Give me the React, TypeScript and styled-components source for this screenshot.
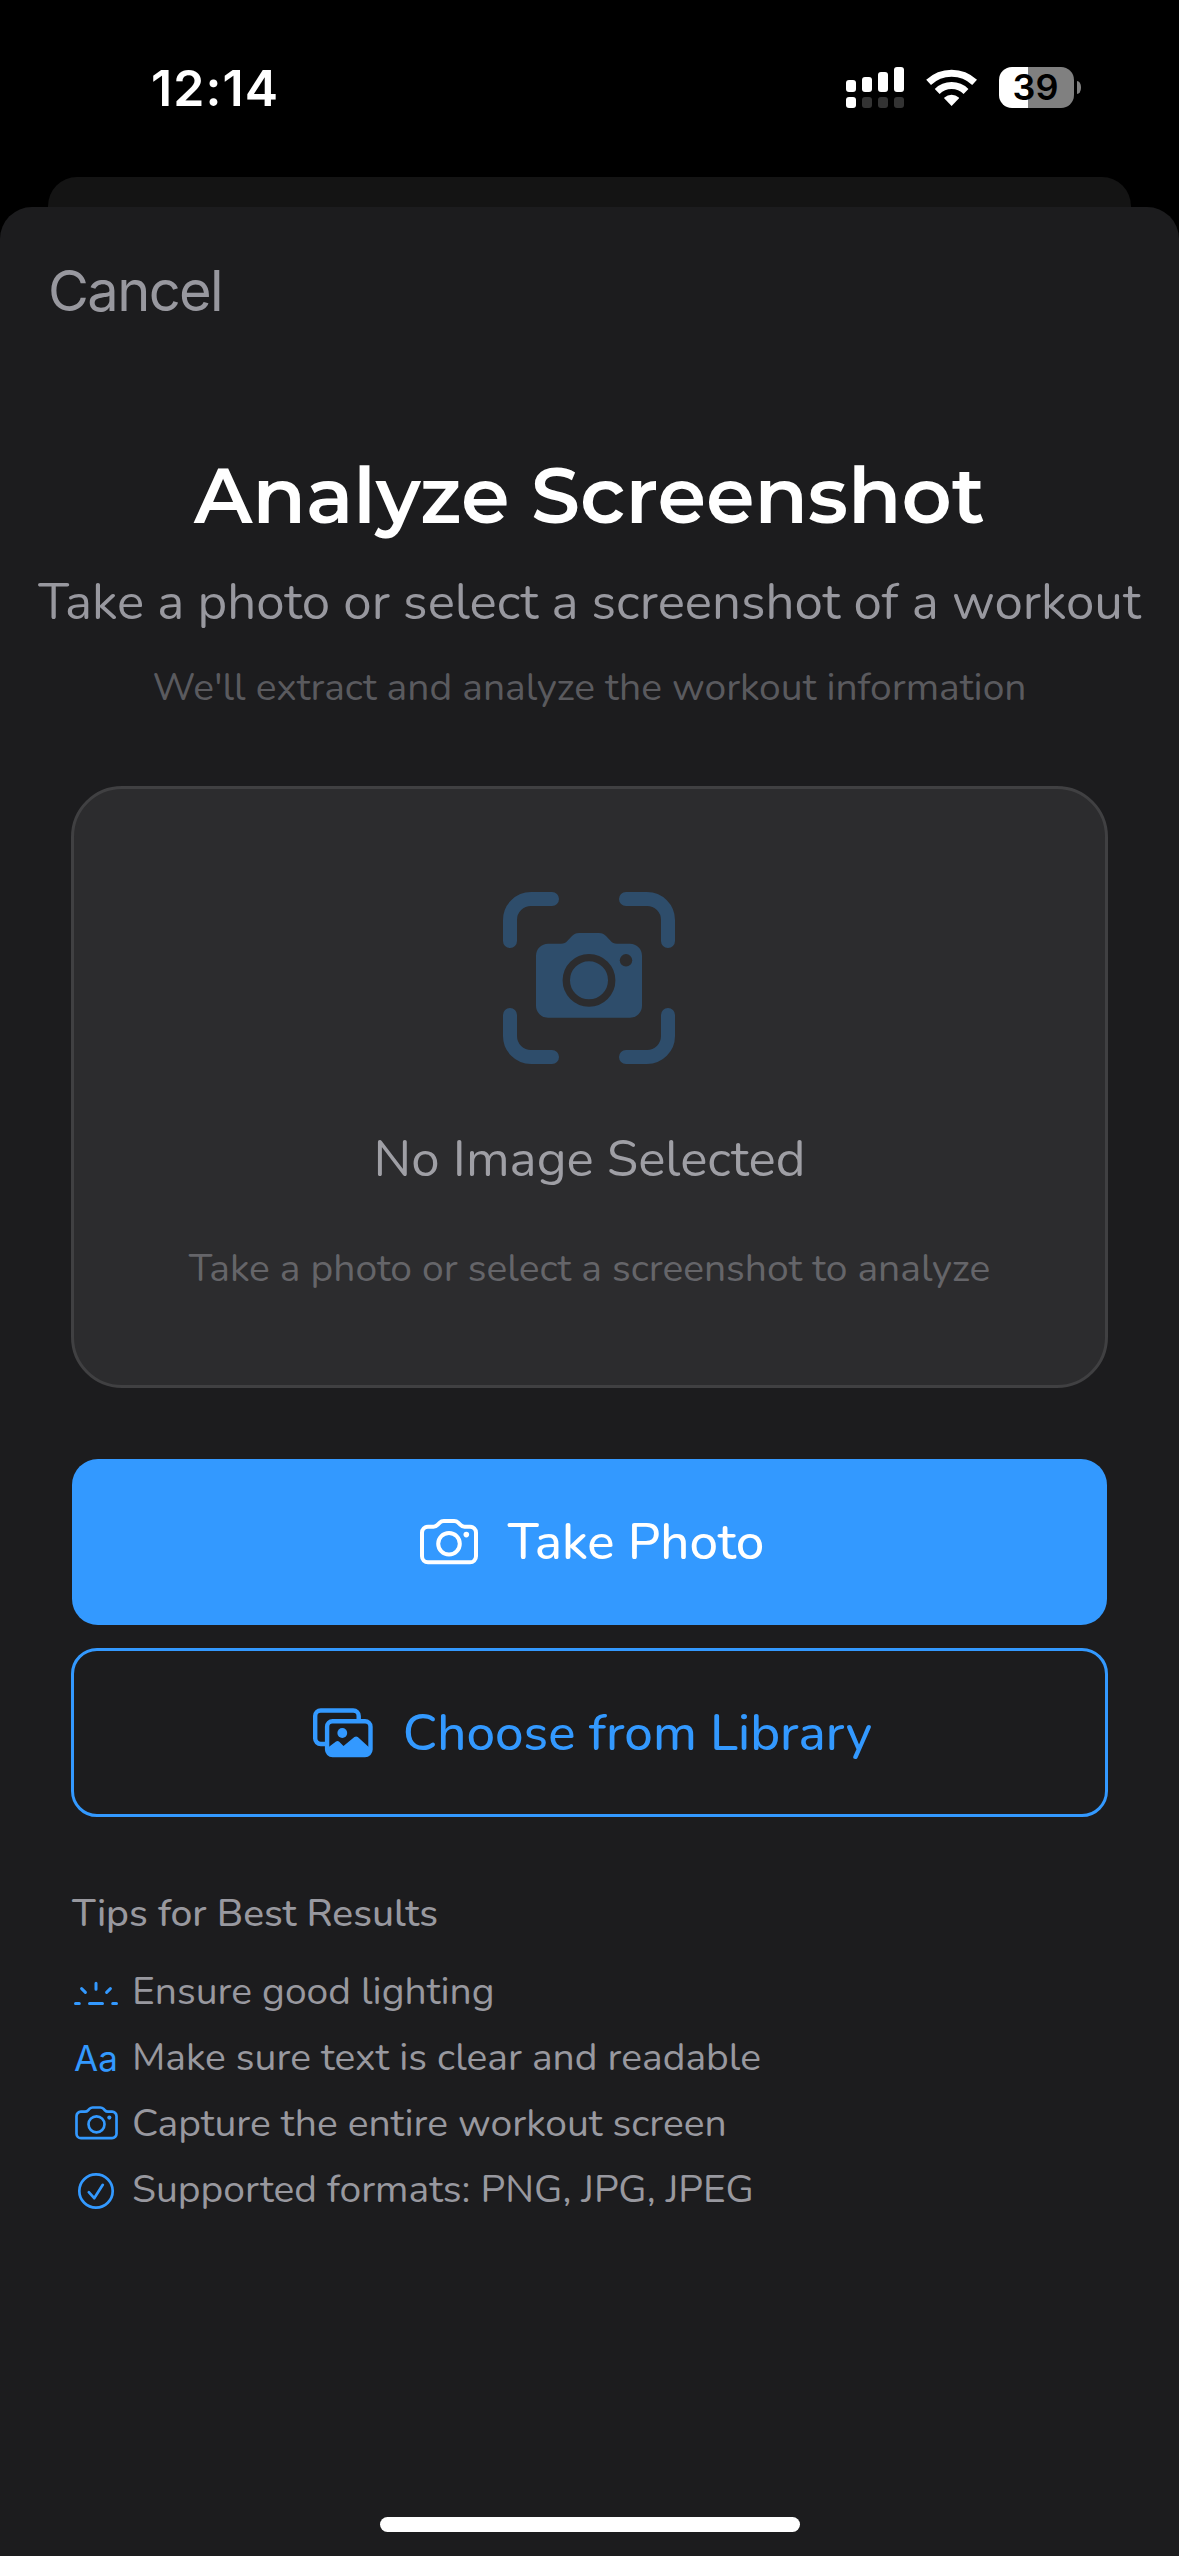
import React from "react";
import styled, { createGlobalStyle } from "styled-components";

const BLUE = "#3399ff";
const SECONDARY = "#98989f";

const GlobalStyle = createGlobalStyle`
  * { box-sizing: border-box; }
  html, body { margin: 0; padding: 0; background: #000; }
`;

const Screen = styled.div`
  width: 1179px;
  height: 2556px;
  display: flex;
  flex-direction: column;
  overflow: hidden;
  background: #000;
  font-family: Nunito, Lato, "Noto Sans", sans-serif;
`;

const StatusBar = styled.header`
  flex: none;
  height: 177px;
  padding: 52px 98px 0 151px;
  display: flex;
  justify-content: space-between;
  align-items: flex-start;
  color: #fff;
`;

const Clock = styled.time`
  font: 600 50px/72px Inter, sans-serif;
  letter-spacing: 1.1px;
`;

const StatusIcons = styled.div`
  display: flex;
  align-items: center;
  padding-top: 15px;
`;

const SignalIcon = styled.svg`
  width: 58px;
  height: 41px;
  margin-right: 22px;
`;

const WifiIcon = styled.svg`
  width: 52px;
  height: 41px;
  margin-right: 21px;
`;

const Battery = styled.div`
  width: 75px;
  height: 41px;
  border-radius: 13px;
  background: linear-gradient(to right, #fff 29px, #808080 29px);
  color: #000;
  display: flex;
  align-items: center;
  justify-content: center;
  padding-right: 2px;
  font: 600 36px/41px Inter, sans-serif;
`;

const BatteryTip = styled.div`
  width: 4px;
  height: 13px;
  margin-left: 3px;
  border-radius: 0 4px 4px 0 / 0 6px 6px 0;
  background: #808080;
`;

const SheetBehind = styled.div`
  flex: none;
  height: 30px;
  margin: 0 48px;
  border-radius: 29px 29px 0 0;
  background: #141414;
`;

const Sheet = styled.main`
  flex: 1;
  display: flex;
  flex-direction: column;
  border-radius: 32px 32px 0 0;
  background: #1c1c1e;
`;

const NavBar = styled.nav`
  padding: 49px 48px 0;
  height: 241px;
`;

const CancelButton = styled.button`
  border: 0;
  padding: 0;
  background: none;
  color: ${SECONDARY};
  font: 400 56px/70px Inter, sans-serif;
  letter-spacing: -1.6px;
`;

const Intro = styled.section`
  display: flex;
  flex-direction: column;
  align-items: center;
  white-space: nowrap;
`;

const Title = styled.h1`
  margin: 0 0 24px;
  font: 600 78px/95px Montserrat, Inter, sans-serif;
  color: #fff;
`;

const Body = styled.p<{ $tone?: string }>`
  margin: 0;
  font-size: 51px;
  line-height: 70px;
  color: ${(p) => p.$tone ?? SECONDARY};
`;

const Caption = styled.p<{ $tone?: string; $gap?: number }>`
  margin: ${(p) => p.$gap ?? 0}px 0 0;
  font-size: 39px;
  line-height: 53px;
  color: ${(p) => p.$tone ?? SECONDARY};
`;

const Content = styled.section`
  display: flex;
  flex-direction: column;
  padding: 72px 71px 0;
`;

const EmptyCard = styled.div`
  height: 602px;
  padding-top: 103px;
  border: 3px solid #404042;
  border-radius: 51px;
  background: #2c2c2e;
  display: flex;
  flex-direction: column;
  align-items: center;
`;

const Viewfinder = styled.svg`
  width: 172px;
  height: 172px;
  margin: 0 1px 60px 0;
`;

const Actions = styled.div`
  display: flex;
  flex-direction: column;
  gap: 23px;
  padding-top: 71px;
`;

const ActionButton = styled.button<{ $outlined?: boolean }>`
  display: flex;
  align-items: center;
  justify-content: center;
  gap: ${(p) => (p.$outlined ? 29 : 30)}px;
  height: ${(p) => (p.$outlined ? 169 : 166)}px;
  margin: ${(p) => (p.$outlined ? "0" : "0 1px")};
  padding: 0 0 0 ${(p) => (p.$outlined ? 2 : 0)}px;
  border: ${(p) => (p.$outlined ? `3px solid ${BLUE}` : "0")};
  border-radius: 26px;
  background: ${(p) => (p.$outlined ? "transparent" : BLUE)};
  color: ${(p) => (p.$outlined ? BLUE : "#fff")};
  font: 500 51px/70px Nunito, Lato, sans-serif;
`;

const Tips = styled.div`
  padding: 70px 1px 0;
`;

const TipsTitle = styled.h2`
  margin: 0 0 25px;
  font-size: 39px;
  line-height: 53px;
  font-weight: 500;
  letter-spacing: -0.04px;
  color: ${SECONDARY};
`;

const TipList = styled.ul`
  list-style: none;
  margin: 0;
  padding: 0;
  display: flex;
  flex-direction: column;
  gap: 13px;
`;

const Tip = styled.li`
  display: flex;
  align-items: center;
  gap: 12px;
  height: 53px;
`;

const TipIcon = styled.span`
  width: 48px;
  height: 48px;
  display: flex;
  align-items: center;
  justify-content: center;
  color: ${BLUE};
`;

const LetterIcon = styled.span`
  font: 400 35px/48px Inter, sans-serif;
`;

const HomeIndicator = styled.div`
  width: 420px;
  height: 15px;
  margin: auto auto 24px;
  border-radius: 8px;
  background: #fff;
`;

function CameraOutline({ width, stroke, inset = 0 }: { width: number; stroke: number; inset?: number }) {
  const units = 58 + inset;
  return (
    <svg width={width} height={(width / units) * 46} viewBox={`${-inset} 0 ${units} 46`} fill="none" stroke="currentColor" strokeWidth={stroke}>
      <path d="M8 7.7H13.5c2 0 3-.6 4.3-2l2-2.1c1-1 2-1.6 4-1.6H34.2c2 0 3 .6 4 1.6l2 2.1c1.3 1.4 2.3 2 4.3 2H50a6 6 0 0 1 6 6V37.3a6 6 0 0 1-6 6H8a6 6 0 0 1-6-6V13.7a6 6 0 0 1 6-6z" />
      <circle cx="29" cy="24.7" r="10.8" />
      <circle cx="46.3" cy="15.6" r="2.8" fill="currentColor" stroke="none" />
    </svg>
  );
}

function PhotoStack() {
  return (
    <svg width="65" height="50" viewBox="0 0 65 50" fill="none" stroke="currentColor" strokeWidth="4.4">
      <path d="M49.7 13V8a5.5 5.5 0 0 0-5.5-5.5H11.7A5.5 5.5 0 0 0 6.2 8v22.5a5.5 5.5 0 0 0 5.5 5.5H18" />
      <rect x="18.1" y="13.2" width="43.4" height="33.8" rx="5.5" />
      <path d="M18.5 40l2.5-2 6-4.4q1.5-1 3 0l4.5 4.4 10.9-8.9q1.7-1.3 3.4 0L58.6 38l2.4 2v4q0 3-4 3H22.5q-4 0-4-3z" fill="currentColor" stroke="none" />
      <circle cx="33.3" cy="25" r="4.9" fill="currentColor" stroke="none" />
    </svg>
  );
}

function SunHorizon() {
  return (
    <svg width="48" height="48" viewBox="0 0 48 48" fill="none" stroke="currentColor" strokeWidth="3" strokeLinecap="round">
      <path d="M3.5 35.5h3.8M17.5 35.5h13M40.7 35.5h3.8M24 15.2v6M9.6 20.6l3.8 3.8M38.4 20.6l-3.8 3.8" />
    </svg>
  );
}

function CheckCircle() {
  return (
    <svg width="48" height="48" viewBox="0 0 48 48" fill="none" stroke="currentColor" strokeWidth="2.7" strokeLinecap="round" strokeLinejoin="round">
      <circle cx="24" cy="25" r="16.7" />
      <path d="M16.8 26.2l5.4 6 8.6-13.4" />
    </svg>
  );
}

const tips = [
  { icon: <SunHorizon />, text: "Ensure good lighting" },
  { icon: <LetterIcon>Aa</LetterIcon>, text: "Make sure text is clear and readable" },
  { icon: <CameraOutline width={43} stroke={3.6} />, text: "Capture the entire workout screen" },
  { icon: <CheckCircle />, text: "Supported formats: PNG, JPG, JPEG" },
];

const signalBars = [13, 10, 5, 0];

export default function App() {
  return (
    <Screen>
      <GlobalStyle />
      <StatusBar>
        <Clock>12:14</Clock>
        <StatusIcons>
          <SignalIcon viewBox="0 0 58 41" fill="#fff">
            {signalBars.map((top, i) => (
              <React.Fragment key={top}>
                <rect x={i * 16} y={top} width="10" height={25 - top} rx="3" />
                <rect x={i * 16} y="30" width="10" height="11" rx="3" fill={i === 0 ? "#fff" : "#333"} />
              </React.Fragment>
            ))}
          </SignalIcon>
          <WifiIcon viewBox="0 0 52 41" fill="none" stroke="#fff" strokeWidth="7">
            <path d="M2.6 15.4a33.4 33.4 0 0 1 46 0" />
            <path d="M11.2 24.4a20.7 20.7 0 0 1 28.8 0" />
            <path d="M25.6 39l-7.2-7.4a1 1 0 0 1 0-1.2 11 11 0 0 1 14.4 0 1 1 0 0 1 0 1.2z" fill="#fff" stroke="none" />
          </WifiIcon>
          <Battery>39</Battery>
          <BatteryTip />
        </StatusIcons>
      </StatusBar>
      <SheetBehind />
      <Sheet>
        <NavBar>
          <CancelButton>Cancel</CancelButton>
        </NavBar>
        <Intro>
          <Title>Analyze Screenshot</Title>
          <Body>Take a photo or select a screenshot of a workout</Body>
          <Caption $tone="#5a5a5e" $gap={24}>
            We'll extract and analyze the workout information
          </Caption>
        </Intro>
        <Content>
          <EmptyCard>
            <Viewfinder viewBox="0 0 172 172" fill="none" stroke="#2e4d6b" strokeWidth="14" strokeLinecap="round">
              <path d="M7 49V28A21 21 0 0 1 28 7H49M123 7H144A21 21 0 0 1 165 28V49M165 123V144A21 21 0 0 1 144 165H123M49 165H28A21 21 0 0 1 7 144V123" />
              <path
                d="M45 51.7H58c3 0 4.5-.8 6.5-3l4.5-4.7c2-2 4-3 7-3H96c3 0 5 1 7 3l4.5 4.7c2 2.2 3.5 3 6.5 3H127a12 12 0 0 1 12 12v50a12 12 0 0 1-12 12H45a12 12 0 0 1-12-12v-50a12 12 0 0 1 12-12z"
                fill="#2e4d6b"
                stroke="none"
              />
              <circle cx="86" cy="88.3" r="22.7" stroke="#2c2c2e" strokeWidth="7.4" />
              <circle cx="123" cy="68.3" r="6.2" fill="#2c2c2e" stroke="none" />
            </Viewfinder>
            <Body $tone="#9f9fa5">No Image Selected</Body>
            <Caption $tone="#656569" $gap={48}>
              Take a photo or select a screenshot to analyze
            </Caption>
          </EmptyCard>
          <Actions>
            <ActionButton>
              <CameraOutline width={63} stroke={4} inset={5} />
              Take Photo
            </ActionButton>
            <ActionButton $outlined>
              <PhotoStack />
              Choose from Library
            </ActionButton>
          </Actions>
          <Tips>
            <TipsTitle>Tips for Best Results</TipsTitle>
            <TipList>
              {tips.map((tip) => (
                <Tip key={tip.text}>
                  <TipIcon>{tip.icon}</TipIcon>
                  <Caption>{tip.text}</Caption>
                </Tip>
              ))}
            </TipList>
          </Tips>
        </Content>
        <HomeIndicator />
      </Sheet>
    </Screen>
  );
}
